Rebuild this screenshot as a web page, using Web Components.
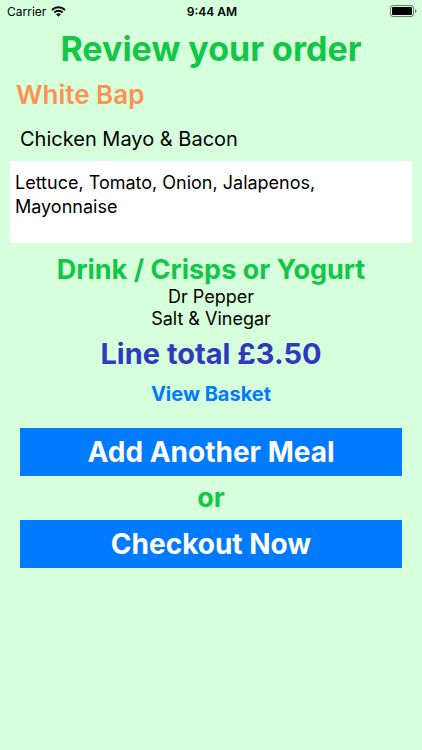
<!DOCTYPE html>
<html lang="en">
<head>
<meta charset="utf-8">
<meta name="viewport" content="width=device-width, initial-scale=1">
<title>Review your order</title>
<style>
  body {
    margin: 0;
    min-height: 100vh;
    background: #d6ffdb;
    color: #000;
    font-family: Inter, "Liberation Sans", sans-serif;
  }
</style>
</head>
<body>
<order-review>
  <span slot="title">Review your order</span>
  <span slot="bread">White Bap</span>
  <span slot="filling">Chicken Mayo &amp; Bacon</span>
</order-review>

<script>
const STATUS_TEMPLATE = `
  <style>
    :host {
      display: grid;
      grid-template-columns: 1fr auto 1fr;
      align-items: center;
      height: 22px;
      padding: 0 5px 0 7px;
      font-size: 12px;
    }

    .carrier {
      display: flex;
      align-items: center;
      gap: 5px;
    }

    .time {
      font-weight: 600;
    }

    .battery {
      justify-self: end;
    }

    svg {
      display: block;
    }
  </style>
  <span class="carrier">
    <span>Carrier</span>
    <svg width="15" height="11" viewBox="0 0 15 11" aria-hidden="true">
      <path d="M7.500 10.800 5.200 8.300a3.300 3.300 0 0 1 4.600 0z"></path>
      <path d="M3.400 6.500a5.800 5.800 0 0 1 8.200 0M1 4a9.200 9.200 0 0 1 13 0" fill="none" stroke="#000" stroke-width="2"></path>
    </svg>
  </span>
  <span class="time"><slot></slot></span>
  <svg class="battery" width="27" height="12" viewBox="0 0 27 12" aria-hidden="true">
    <rect x=".5" y=".5" width="23" height="11" rx="2.500" fill="none" stroke="#000" stroke-opacity=".5"></rect>
    <rect x="2" y="2" width="20" height="8" rx="1"></rect>
    <path d="M25 4c2 .7 2 3.300 0 4z" fill-opacity=".5"></path>
  </svg>
`;

const BUTTON_TEMPLATE = `
  <style>
    :host {
      display: block;
    }

    button {
      display: block;
      width: 100%;
      padding: 6px;
      border: 0;
      background: #007aff;
      color: #fff;
      font: 700 28px/36px Inter, "Liberation Sans", sans-serif;
      cursor: pointer;
    }
  </style>
  <button type="button"><slot></slot></button>
`;

const REVIEW_TEMPLATE = `
  <style>
    :host {
      display: block;
    }

    h1, h2, p {
      margin: 0;
    }

    main {
      display: flex;
      flex-direction: column;
      padding: 4px 10px 20px;
      text-align: center;
    }

    h1 {
      color: #12c748;
      font-size: 34px;
      line-height: 46px;
      font-weight: 700;
    }

    h2 {
      color: #12c748;
      font-size: 27px;
      line-height: 32px;
      font-weight: 700;
    }

    .bread {
      padding: 7px 6px 9px;
      color: #ff9154;
      font-size: 26px;
      font-weight: 600;
      text-align: left;
    }

    .filling {
      padding: 7px 10px 10px;
      font-size: 20px;
      line-height: 24px;
      text-align: left;
    }

    textarea {
      display: block;
      box-sizing: border-box;
      width: 100%;
      height: 82px;
      margin-bottom: 11px;
      padding: 10px 5px;
      border: 0;
      resize: none;
      background: #fff;
      color: #000;
      font: 18px/24px Inter, "Liberation Sans", sans-serif;
    }

    .extras {
      font-size: 18px;
      line-height: 22px;
    }

    .total {
      padding: 6px 0 8px;
      color: #3038bd;
      font-size: 29px;
      line-height: 36px;
      font-weight: 700;
    }

    a {
      align-self: center;
      padding: 2px 0 22px;
      color: #007aff;
      font-size: 20px;
      line-height: 24px;
      font-weight: 700;
      text-decoration: none;
    }

    .actions {
      display: grid;
      gap: 6px;
      padding: 0 10px;
    }
  </style>
  <status-bar>9:44 AM</status-bar>
  <main>
    <h1><slot name="title"></slot></h1>
    <h2 class="bread"><slot name="bread"></slot></h2>
    <p class="filling"><slot name="filling"></slot></p>
    <textarea aria-label="Salad and sauces">Lettuce, Tomato, Onion, Jalapenos, Mayonnaise</textarea>
    <h2>Drink / Crisps or Yogurt</h2>
    <p class="extras">Dr Pepper<br>Salt &amp; Vinegar</p>
    <p class="total">Line total £3.50</p>
    <a href="#basket">View Basket</a>
    <div class="actions">
      <action-button>Add Another Meal</action-button>
      <h2>or</h2>
      <action-button>Checkout Now</action-button>
    </div>
  </main>
`;

class StatusBar extends HTMLElement {
  constructor() {
    super();
    this.attachShadow({ mode: "open" }).innerHTML = STATUS_TEMPLATE;
  }
}

class ActionButton extends HTMLElement {
  constructor() {
    super();
    this.attachShadow({ mode: "open" }).innerHTML = BUTTON_TEMPLATE;
  }
}

class OrderReview extends HTMLElement {
  constructor() {
    super();
    this.attachShadow({ mode: "open" }).innerHTML = REVIEW_TEMPLATE;
  }
}

customElements.define("status-bar", StatusBar);
customElements.define("action-button", ActionButton);
customElements.define("order-review", OrderReview);
</script>
</body>
</html>
